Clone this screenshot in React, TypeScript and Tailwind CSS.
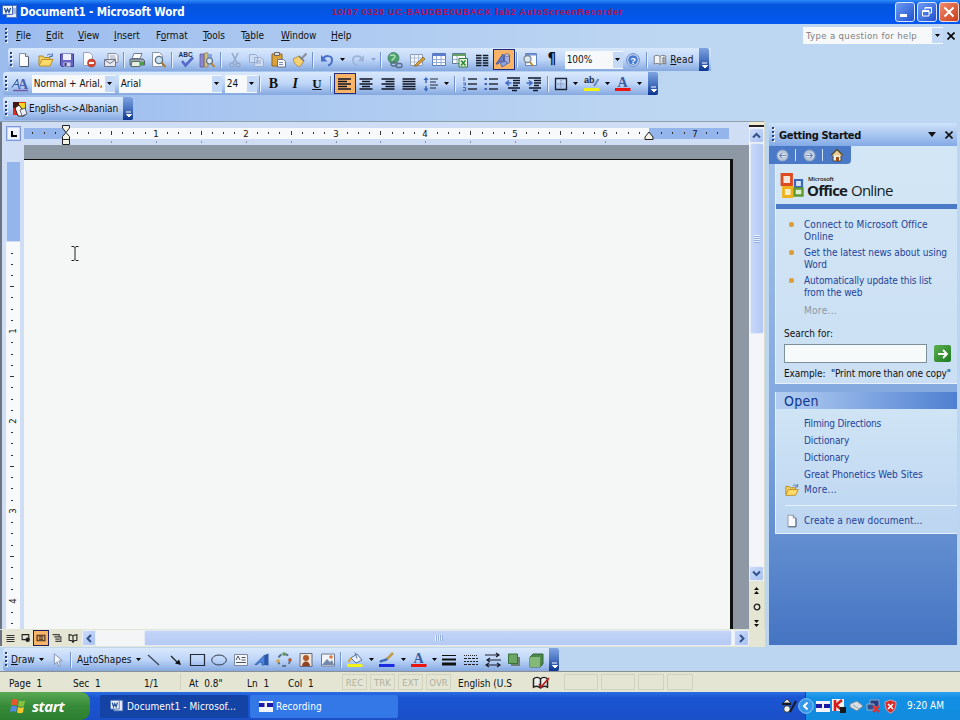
import React from "react";

type Kids = { children?: React.ReactNode };

/* ---------- small building blocks ---------- */

const Ico = ({ children, s = 18 }: Kids & { s?: number }) => (
  <svg width={s} height={s} viewBox="0 0 18 18" fill="none" className="shrink-0">
    {children}
  </svg>
);

const Cell = ({ children, w = "w-[21.7px]" }: Kids & { w?: string }) => (
  <div className={`flex h-full shrink-0 items-center justify-center ${w}`}>{children}</div>
);

const Sep = ({ w = "w-[5.5px]" }: { w?: string }) => (
  <div className={`flex h-full shrink-0 items-center justify-center ${w}`}>
    <div className="h-4 w-px bg-[#7093d0]" />
    <div className="h-4 w-px bg-[#e8f1fe]" />
  </div>
);

const Down = ({ w = "w-[10px]", c = "#000" }: { w?: string; c?: string }) => (
  <div className={`flex h-full shrink-0 items-center justify-center ${w}`}>
    <svg width="5" height="3" viewBox="0 0 5 3">
      <path d="M0 0h5L2.5 3z" fill={c} />
    </svg>
  </div>
);

const Grip = ({ w = "w-[13px]", p = "pl-[10px]" }: { w?: string; p?: string }) => (
  <div className={`flex h-full shrink-0 items-center ${w} ${p}`}>
    <svg width="3" height="15" viewBox="0 0 3 15">
      {[0, 4, 8, 12].map((y) => (
        <g key={y}>
          <rect x="1" y={y + 1} width="2" height="2" fill="#fff" />
          <rect x="0" y={y} width="2" height="2" fill="#27417c" />
        </g>
      ))}
    </svg>
  </div>
);

const Cap = () => (
  <div className="flex h-full w-[10px] shrink-0 items-end justify-center rounded-r-[2px] bg-linear-to-b from-[#7fa4e2] via-[#4a74c0] to-[#0c3590] pb-[2px]">
    <svg width="7" height="7" viewBox="0 0 7 7">
      <path d="M1 1h5M1.500 3.500h5L4 6z" stroke="#fff" strokeWidth="1" fill="#fff" />
    </svg>
  </div>
);

const Bar = ({ children, cls }: Kids & { cls: string }) => (
  <div className={`flex shrink-0 items-center bg-linear-to-b from-[#d9e8fc] via-[#bfd6f8] to-[#85a8e0] ${cls}`}>
    {children}
  </div>
);

const Combo = ({ children, cls }: Kids & { cls: string }) => (
  <div className={`flex h-[18px] shrink-0 items-center bg-[#f6f8fa] ${cls}`}>
    <span className="grow overflow-hidden pl-[2px] whitespace-nowrap">{children}</span>
    <div className="h-[16px] w-[10px] bg-[#c3d9f5]">
      <Down />
    </div>
  </div>
);

const U = ({ children }: Kids) => <span className="underline underline-offset-1">{children}</span>;

/* ---------- icons ---------- */

const page = "M4.5 2.5h6l3 3v10h-9z";
const NewDoc = ({ s }: { s?: number }) => (
  <Ico s={s}>
    <path d={page} fill="#fbfcfe" stroke="#8a93a8" />
    <path d="M10.500 2.500v3h3" fill="#dbe3ee" stroke="#6d7890" />
    <path d="M13.500 6v9.500H5" stroke="#4d5870" />
  </Ico>
);
const Folder = ({ s }: { s?: number }) => (
  <Ico s={s}>
    <path d="M2 14V5h4l1 1.500h6V9" fill="#f3cf61" stroke="#b38a21" />
    <path d="M2 15l3-6.500h11L13 15z" fill="#ffd96a" stroke="#b98e22" />
    <path d="M10 4.500c2-2 4-1.500 5 .5m.3-2.800V5.500h-3" stroke="#4a72b8" />
  </Ico>
);
const Save = () => (
  <Ico>
    <path d="M2.500 3h13v12.500h-12l-1-1z" fill="#6a63c6" stroke="#3e3a92" />
    <path d="M5 3h8v6H5z" fill="#eef0fb" />
    <path d="M5.500 11.500h7v4h-7z" fill="#cfd3e8" />
    <path d="M6.500 12h2v3h-2z" fill="#38347f" />
  </Ico>
);
const Perm = () => (
  <Ico>
    <path d="M3.500 1.500h6l3 3v10h-9z" fill="#fbfcfe" stroke="#98a2b6" />
    <circle cx="11.500" cy="12" r="4" fill="#d84a33" stroke="#a83020" strokeWidth=".6" />
    <path d="M9 12h5" stroke="#fff" strokeWidth="2" />
  </Ico>
);
const Mail = () => (
  <Ico>
    <path d="M6 2.500h8l2 2v7H6z" fill="#f4f5f8" stroke="#8a8fa0" />
    <path d="M8 5h5M8 7h6" stroke="#a0a6b8" />
    <path d="M2.500 8.500h11v7h-11z" fill="#e5e7ee" stroke="#6f7488" />
    <path d="M3 9l5 3.500L13 9" stroke="#6f7488" />
  </Ico>
);
const Print = () => (
  <Ico>
    <path d="M6 2.500h8l-2 5H4z" fill="#fff" stroke="#707a8c" />
    <path d="M2 8h13l1.500 1.500V14H2z" fill="#9aa6b4" stroke="#54606f" />
    <path d="M4 10.500h8v5H3z" fill="#e6efe6" stroke="#55705c" />
    <path d="M12 11h4v3h-4z" fill="#46a03f" />
  </Ico>
);
const Preview = () => (
  <Ico>
    <path d="M3.500 1.500h7l3 3v11h-10z" fill="#fafbfd" stroke="#8a94aa" />
    <circle cx="10" cy="9" r="3.600" fill="#cfe3ef" stroke="#58708a" strokeWidth="1.300" />
    <path d="M12.500 11.500l4 4.500" stroke="#a97832" strokeWidth="2" />
  </Ico>
);
const Spell = () => (
  <Ico>
    <text x="1.500" y="6" fontSize="6.500" fontWeight="700" fontFamily="Liberation Sans, sans-serif" fill="#1c2c50">ABC</text>
    <path d="M5 10l3.500 4.500L16 6.500" stroke="#5469cb" strokeWidth="2.600" />
  </Ico>
);
const Research = () => (
  <Ico>
    <path d="M2 3h4v13H2z" fill="#8f86d0" stroke="#5c54a2" strokeWidth=".7" />
    <path d="M6.500 2h3.500v14H6.500z" fill="#cfc08a" stroke="#8d7a45" strokeWidth=".7" />
    <path d="M10 3h4v6h-4z" fill="#87a7d8" />
    <circle cx="11.500" cy="10" r="3" fill="#dceaf4" stroke="#5a6e88" strokeWidth="1.200" />
    <path d="M13.500 12.500l3 3.500" stroke="#b88634" strokeWidth="2" />
  </Ico>
);
const Cut = () => (
  <Ico>
    <path d="M6 2l5 10M12 2L7 12" stroke="#93a7c9" strokeWidth="1.500" />
    <circle cx="6" cy="14" r="2" stroke="#93a7c9" strokeWidth="1.300" />
    <circle cx="12" cy="14" r="2" stroke="#93a7c9" strokeWidth="1.300" />
  </Ico>
);
const Copy = () => (
  <Ico>
    <path d="M2.500 3.500h6l2 2v6h-8zM7.500 6.500h6l3 2v7h-9z" fill="#cfdcf2" stroke="#98add0" />
    <path d="M9 10h5M9 12h5" stroke="#98add0" />
  </Ico>
);
const Paste = () => (
  <Ico>
    <path d="M3 3h10v12H3z" fill="#dba33b" stroke="#93641a" />
    <path d="M5.500 1.500h5v3h-5z" fill="#d9dde6" stroke="#70645a" />
    <path d="M8.500 8.500h6l2 2v5.500h-8z" fill="#f5f7fb" stroke="#6a7488" />
    <path d="M10 11.500h4M10 13.500h4" stroke="#7b8cb4" />
  </Ico>
);
const Brush = () => (
  <Ico>
    <path d="M2 8l6-3 5 5-4 5.500c-3 0-6-3-7-7.500z" fill="#f3d070" stroke="#a88230" strokeWidth=".8" />
    <path d="M10.500 7.500l5-5" stroke="#8a8f9c" strokeWidth="2.200" />
    <path d="M8 5l5 5" stroke="#6e7684" strokeWidth="1.500" />
  </Ico>
);
const Undo = () => (
  <Ico>
    <path d="M5 8c2-4 9-4 9 1 0 3-2 5-4 5.500" stroke="#4a6fc8" strokeWidth="2" />
    <path d="M3 4v6.500h6.500z" fill="#4a6fc8" />
  </Ico>
);
const Redo = () => (
  <Ico>
    <path d="M13 8c-2-4-9-4-9 1 0 3 2 5 4 5.500" stroke="#9fb3d6" strokeWidth="1.800" />
    <path d="M15 4v6.500H8.500z" fill="#9fb3d6" />
  </Ico>
);
const Link = () => (
  <Ico>
    <circle cx="7.500" cy="7" r="5.500" fill="#4da26b" stroke="#3d7c60" strokeWidth=".8" />
    <path d="M4 4c2 1 4-1 5 1s-3 2-3 5" stroke="#a7dcb8" strokeWidth="1.500" />
    <rect x="5" y="11" width="6" height="4" rx="2" stroke="#5b6d88" strokeWidth="1.300" />
    <rect x="10" y="12.500" width="6" height="4" rx="2" stroke="#5b6d88" strokeWidth="1.300" />
  </Ico>
);
const Tables = () => (
  <Ico>
    <path d="M2.500 3.500h12v11h-12z" fill="#f6f8fd" stroke="#8b9ab8" />
    <path d="M2.500 7h12M2.500 11h12M6.500 3.500v11M10.500 3.500v11" stroke="#b0bdd6" />
    <path d="M6 15l9-9 2 2-8 7z" fill="#d99f37" stroke="#80591a" strokeWidth=".7" />
  </Ico>
);
const Grid = () => (
  <Ico>
    <path d="M2.500 2.500h13v12h-13z" fill="#fafcff" stroke="#5b79b8" />
    <path d="M2.500 3h13v2h-13z" fill="#5b7fd0" />
    <path d="M2.500 8.500h13M2.500 11.500h13M6.500 5v9.500M11 5v9.500" stroke="#98aed6" />
  </Ico>
);
const Excel = () => (
  <Ico>
    <path d="M1.500 2.500h13v10h-13z" fill="#fafcff" stroke="#5d7c98" />
    <path d="M1.500 3h13v2h-13z" fill="#68a262" />
    <path d="M1.500 8.500h13M6 5v7.500" stroke="#9cb1bf" />
    <path d="M8 7.500h8.500v8.500H8z" fill="#e8f5e3" stroke="#2f7d33" />
    <path d="M10 9.500l4.500 5M14.500 9.500l-4.500 5" stroke="#2b8a30" strokeWidth="1.600" />
  </Ico>
);
const Columns = () => (
  <Ico>
    <path d="M3 4.500h5.500M3 7h5.500M3 9.500h5.500M3 12h5.500M3 14.500h5.500M9.800 4.500h5.500M9.800 7h5.500M9.800 9.500h5.500M9.800 12h5.500M9.800 14.500h5.500" stroke="#111827" strokeWidth="1.300" />
  </Ico>
);
const Drawing = () => (
  <Ico>
    <path d="M1 13L8 3l1 10H7v-3H5l-2 3z" fill="#6f86cf" stroke="#3b4f98" strokeWidth=".9" />
    <path d="M9.500 4v7.500c1 1.200 4 1.200 5 0V4z" fill="#a6aedb" stroke="#4a5aa0" strokeWidth=".9" />
    <ellipse cx="12" cy="4" rx="2.500" ry="1.200" fill="#f3e4c0" stroke="#4a5aa0" strokeWidth=".8" />
    <path d="M5 11.500l6-1.500 1 3-5 3z" fill="#8ba3df" stroke="#4b5fa0" strokeWidth=".8" />
  </Ico>
);
const DocMap = () => (
  <Ico>
    <path d="M4.500 2.500h11v12h-11z" fill="#fafcfe" stroke="#6082bd" />
    <path d="M4.500 3h11v1.500h-11z" fill="#6f94d8" />
    <circle cx="6.500" cy="8" r="3.500" fill="#dbe8f2" stroke="#7b8593" strokeWidth="1.300" />
    <path d="M9 11l3 4" stroke="#b78d36" strokeWidth="2" />
  </Ico>
);
const Help = () => (
  <Ico>
    <circle cx="9" cy="9" r="6.300" fill="#dbe8fb" stroke="#5b80c2" />
    <circle cx="9" cy="9" r="4.800" fill="#4878cf" />
    <text x="6.200" y="12.500" fontSize="9.500" fontWeight="700" fontFamily="Liberation Sans, sans-serif" fill="#fff">?</text>
  </Ico>
);
const Book = ({ s, c = "#6f7377" }: { s?: number; c?: string }) => (
  <Ico s={s}>
    <path d="M2.500 4.500c2-1 5-1 6.500.5 1.500-1.500 4.500-1.500 6.500-.5v9c-2-1-5-1-6.500.5-1.500-1.500-4.500-1.500-6.500-.5z" fill="#f1f3f5" stroke={c} />
    <path d="M9 5v9M11 7h3M11 9h3M11 11h3M13.500 5v9" stroke={c} />
  </Ico>
);
const Lines = ({ d }: { d: string }) => (
  <Ico>
    <path d={d} stroke="#101625" strokeWidth="1.300" />
  </Ico>
);
const Color = ({ c, children }: Kids & { c: string }) => (
  <Ico>
    {children}
    <path d="M1 13h15.500v3H1z" fill={c} />
  </Ico>
);
const LetterA = () => (
  <text x="3.500" y="12" fontSize="14" fontWeight="700" fontFamily="Liberation Serif, serif" fill="#395da0">A</text>
);

/* ---------- horizontal and vertical rulers ---------- */

const INCH = 89.85;
const marks = Array.from({ length: 64 }, (_, i) => i - 3);

const HRuler = () => (
  <svg width="725" height="24" viewBox="24 121 725 24" className="shrink-0" shapeRendering="crispEdges">
    <rect x="24" y="121" width="725" height="24" fill="#d0def5" />
    <rect x="24" y="127" width="42" height="11" fill="#94b5eb" />
    <rect x="66" y="127" width="583" height="11" fill="#f8f9fa" />
    <rect x="649" y="127" width="80" height="11" fill="#94b5eb" />
    {marks.map((i) => {
      const x = Math.round(66 + (i * INCH) / 8);
      if (x > 722 || i === 0 || Math.abs(x - 649) < 5) return null;
      if (i > 0 && i % 8 === 0)
        return (
          <g key={i}>
            <text x={x} y="136" fontSize="9.500" textAnchor="middle" fill="#111">{i / 8}</text>
            {x < 649 && <rect x={x} y="140" width="1" height="2" fill="#8b93a4" />}
          </g>
        );
      if (i > 0 && i % 4 === 0)
        return (
          <g key={i}>
            <rect x={x} y="130" width="1" height="4" fill="#333" />
            {x < 649 && <rect x={x} y="140" width="1" height="2" fill="#8b93a4" />}
          </g>
        );
      return <rect key={i} x={x} y="131" width="1" height="2" fill="#333" />;
    })}
    <g shapeRendering="auto" fill="#f3f3e6" stroke="#222" strokeWidth="1">
      <path d="M62.500 124.500h7v2.500l-3.500 4.500-3.500-4.500z" />
      <path d="M66 131.500l3.500 4v3h-7v-3zM62.500 138.500h7v5h-7z" />
      <path d="M649 131l4 5v2.500h-8V136z" />
    </g>
  </svg>
);

const VRuler = () => (
  <svg width="20" height="484" viewBox="4 145 20 484" className="shrink-0" shapeRendering="crispEdges">
    <rect x="4" y="145" width="20" height="484" fill="#d0def5" />
    <rect x="7" y="162" width="13" height="79" fill="#94b5eb" />
    <rect x="6" y="242" width="14" height="387" fill="#f8f9fa" />
    {Array.from({ length: 35 }, (_, k) => k + 1).map((i) => {
      const y = Math.round(241.300 + (i * INCH) / 8);
      if (y > 627) return null;
      if (i % 8 === 0)
        return (
          <text key={i} transform={`translate(16 ${y}) rotate(-90)`} fontSize="9.500" textAnchor="middle" fill="#111">
            {i / 8}
          </text>
        );
      if (i % 4 === 0) return <rect key={i} x="10" y={y} width="4" height="1" fill="#333" />;
      return <rect key={i} x="11" y={y} width="2" height="1" fill="#333" />;
    })}
  </svg>
);

const SBtn = ({ d, cls = "h-[15px] w-[15px]" }: { d: string; cls?: string }) => (
  <div className={`flex shrink-0 items-center justify-center rounded-[2px] border border-[#eaf0fb] bg-linear-to-br from-[#cbdcfb] to-[#a9c2f0] ${cls}`}>
    <svg width="9" height="9" viewBox="0 0 9 9" fill="none">
      <path d={d} stroke="#36508c" strokeWidth="2" />
    </svg>
  </div>
);

/* ---------- sections ---------- */

const TitleBar = () => (
  <div className="flex h-6 shrink-0 items-center bg-linear-to-b from-[#2f8afb] from-0% via-[#0454dc] via-20% to-[#0558f2] pr-px">
    <svg width="16" height="16" viewBox="0 0 16 16" className="ml-[2px] shrink-0">
      <path d="M4.500 1.500h10v12h-10z" fill="#e7edf8" stroke="#5a78b8" />
      <path d="M11 5h3M11 7h3M11 9h3" stroke="#6a88c0" />
      <path d="M.5 1.500h10v9H.500z" fill="#f3f6fb" stroke="#486cb8" />
      <path d="M2.500 4l1.500 4.500L5.500 5 7 8.500 8.500 4" fill="none" stroke="#29549c" strokeWidth="1.300" />
    </svg>
    <div className="w-[314px] pt-[2px] pl-[2px] text-[11.5px] leading-none font-bold tracking-[-0.1px] text-white">
      Document1 - Microsoft Word
    </div>
    <div className="w-[300px] pt-px font-['Liberation_Sans'] text-[9px] leading-none font-bold tracking-[0.78px] whitespace-nowrap text-[#b5104a]">
      10/07 0320 UC-BAUDBE0UBACK lab2 AutoScreenRecorder
    </div>
    <div className="grow" />
    <div className="flex gap-[2px]">
      <div className="h-5 w-5 rounded-[3px] border border-[#dbe6fb] bg-linear-to-br from-[#6f9bf3] to-[#1f4fce] pt-[11px] pl-1">
        <div className="h-[3px] w-[7px] bg-white" />
      </div>
      <div className="flex h-5 w-5 items-center justify-center rounded-[3px] border border-[#dbe6fb] bg-linear-to-br from-[#6f9bf3] to-[#1f4fce]">
        <svg width="12" height="12" viewBox="0 0 12 12" fill="none" stroke="#fff">
          <path d="M4 3.500v-2h6.500V7H8M4 2h6.500M1.500 4.500H8V10H1.500zM1.500 5.500H8" />
        </svg>
      </div>
      <div className="flex h-5 w-5 items-center justify-center rounded-[3px] border border-[#f3dcd5] bg-linear-to-br from-[#ee8a6c] to-[#c93a12]">
        <svg width="12" height="12" viewBox="0 0 12 12" stroke="#fff" strokeWidth="2">
          <path d="M1.500 1.500l9 9M10.500 1.500l-9 9" />
        </svg>
      </div>
    </div>
  </div>
);

const menus: [string, string, string, string][] = [
  ["", "F", "ile", "w-[30px]"],
  ["", "E", "dit", "w-[32px]"],
  ["", "V", "iew", "w-[36px]"],
  ["", "I", "nsert", "w-[42px]"],
  ["F", "o", "rmat", "w-[47px]"],
  ["", "T", "ools", "w-[38px]"],
  ["T", "a", "ble", "w-[40px]"],
  ["", "W", "indow", "w-[50px]"],
  ["", "H", "elp", "w-[40px]"],
];

const MenuBar = () => (
  <div className="flex h-[23px] shrink-0 items-center">
    <Grip w="w-4" p="pl-[5px]" />
    {menus.map(([a, b, c, w]) => (
      <div key={b + c} className={`shrink-0 pt-px whitespace-nowrap ${w}`}>
        {a}
        <U>{b}</U>
        {c}
      </div>
    ))}
    <div className="grow" />
    <div className="flex h-[17px] w-[140px] items-center bg-[#f6f8fa] text-[#808080]">
      <span className="grow pl-[3px] text-[9.5px] tracking-[0.35px] whitespace-nowrap">Type a question for help</span>
      <div className="h-[15px] w-[11px] bg-[#c3d9f5]">
        <Down />
      </div>
    </div>
    <svg width="8" height="8" viewBox="0 0 8 8" className="mr-[5px] ml-[4px]" stroke="#000" strokeWidth="1.600">
      <path d="M.5.5l7 7M7.500.5l-7 7" />
    </svg>
  </div>
);

const StandardBar = () => (
  <Bar cls="ml-2 h-[23px] w-[703px] rounded-l-[3px]">
    <Grip w="w-[5px]" p="pl-[2px]" />
    {[NewDoc, Folder, Save, Perm, Mail].map((I, i) => (
      <Cell key={i}><I /></Cell>
    ))}
    <Sep w="w-[4.5px]" />
    <Cell><Print /></Cell>
    <Cell><Preview /></Cell>
    <Sep />
    <Cell><Spell /></Cell>
    <Cell><Research /></Cell>
    <Sep />
    <Cell><Cut /></Cell>
    <Cell><Copy /></Cell>
    <Cell><Paste /></Cell>
    <Cell><Brush /></Cell>
    <Sep />
    <Cell><Undo /></Cell>
    <Down />
    <Cell><Redo /></Cell>
    <Down w="w-[9px]" c="#8ea3c8" />
    <Sep w="w-[6px]" />
    <Cell><Link /></Cell>
    <Cell><Tables /></Cell>
    <Cell><Grid /></Cell>
    <Cell><Excel /></Cell>
    <Cell><Columns /></Cell>
    <div className="flex h-[21px] w-[22px] shrink-0 items-center justify-center border border-[#1c2c82] bg-[#f9b468]">
      <Drawing />
    </div>
    <Sep w="w-[4.5px]" />
    <Cell><DocMap /></Cell>
    <Cell>
      <span className="font-['DejaVu_Sans'] text-[15px] leading-none font-bold text-[#0c1222]">¶</span>
    </Cell>
    <Combo cls="ml-[2px] w-[58px]">100%</Combo>
    <Cell><Help /></Cell>
    <Sep w="w-[5px]" />
    <Cell w="w-[21px]"><Book s={16} /></Cell>
    <span className="w-[29px] shrink-0 tracking-[0.2px]"><U>R</U>ead</span>
    <Cap />
  </Bar>
);

const FormatBar = () => (
  <Bar cls="ml-[3px] h-[23px] w-[655px] rounded-l-[3px]">
    <Grip w="w-[6px]" p="pl-[2px]" />
    <Cell>
      <Ico>
        <path d="M1 12.500L6.500 4l1 8.500M3.500 9.500h4" stroke="#28519e" />
        <text x="7" y="14" fontSize="14" fontWeight="700" fontFamily="Liberation Serif, serif" fill="#495fae">A</text>
        <path d="M2 15.500h15" stroke="#7056a8" strokeWidth="1.400" />
      </Ico>
    </Cell>
    <Combo cls="ml-[1px] w-[83px]">Normal + Arial,</Combo>
    <Combo cls="ml-[4px] w-[103px]">Arial</Combo>
    <Combo cls="ml-[3px] w-[32px]">24</Combo>
    <Sep w="w-[6px]" />
    <Cell><b className="font-['Liberation_Serif'] text-[14px] leading-none font-black">B</b></Cell>
    <Cell><b className="font-['Liberation_Serif'] text-[14px] leading-none italic">I</b></Cell>
    <Cell><b className="font-['Liberation_Serif'] text-[13px] leading-none underline">U</b></Cell>
    <Sep w="w-[6px]" />
    <div className="flex h-[21px] w-[22px] shrink-0 items-center justify-center border border-[#1c2c82] bg-[#f9b468]">
      <Lines d="M2 4h13M2 6.500h9M2 9h13M2 11.500h9M2 14h13" />
    </div>
    <Cell w="w-[21px]"><Lines d="M2.500 4h13M5 6.500h8M2.500 9h13M5 11.500h8M2.500 14h13" /></Cell>
    <Cell><Lines d="M2.500 4h13M6.500 6.500h9M2.500 9h13M6.500 11.500h9M2.500 14h13" /></Cell>
    <Cell><Lines d="M2.500 4h13M2.500 6.500h13M2.500 9h13M2.500 11.500h13M2.500 14h13" /></Cell>
    <Cell>
      <Ico>
        <path d="M8 4h8M8 7h6M8 10h8M8 13h6" stroke="#222a3c" strokeWidth="1.200" />
        <path d="M4 3v5M4 11v5" stroke="#3b67bd" strokeWidth="1.500" />
        <path d="M1.500 5L4 2l2.500 3zM1.500 13.500L4 16.500l2.500-3z" fill="#3b67bd" />
      </Ico>
    </Cell>
    <Down />
    <Sep w="w-[7px]" />
    <Cell>
      <Ico>
        <path d="M7 4h9M7 9h9M7 14h9" stroke="#2a3040" strokeWidth="1.300" />
        <path d="M3 2v4M2 8h2.500v2H2.500M2 12.500h2.500v3H2" stroke="#4266b4" />
      </Ico>
    </Cell>
    <Cell>
      <Ico>
        <path d="M7 4h9M7 9h9M7 14h9" stroke="#2a3040" strokeWidth="1.300" />
        <path d="M2.500 3h2.500v2H2.500zM2.500 8h2.500v2H2.500zM2.500 13h2.500v2H2.500z" fill="#4266b4" />
      </Ico>
    </Cell>
    <Cell>
      <Ico>
        <path d="M3 3h13M9 5.500h7M9 8h7M9 10.500h5M4 13h12M8 15.500h5" stroke="#10182a" strokeWidth="1.300" />
        <path d="M7.500 8H3M5 5.500L2 8l3 2.500" stroke="#4068c0" strokeWidth="1.500" />
      </Ico>
    </Cell>
    <Cell w="w-[21px]">
      <Ico>
        <path d="M3 3h13M9 5.500h7M9 8h7M9 10.500h5M4 13h12M8 15.500h5" stroke="#10182a" strokeWidth="1.300" />
        <path d="M1.500 8H6M4 5.500L7 8l-3 2.500" stroke="#4068c0" strokeWidth="1.500" />
      </Ico>
    </Cell>
    <Sep w="w-[6px]" />
    <Cell w="w-[20px]">
      <Ico>
        <path d="M3.500 3.500h11v11h-11z" stroke="#1c2538" strokeWidth="1.300" />
        <path d="M9 5v8M5 9h8" stroke="#7285a8" strokeDasharray="1.500 1" />
      </Ico>
    </Cell>
    <Down />
    <Cell>
      <Color c="#f2f215">
        <text x="1" y="8" fontSize="9" fontWeight="700" fontFamily="Liberation Sans, sans-serif" fill="#1c263c">ab</text>
        <path d="M11 11l4.500-7" stroke="#7187bb" strokeWidth="2.300" />
      </Color>
    </Cell>
    <Down />
    <Cell><Color c="#ec1310"><LetterA /></Color></Cell>
    <Down />
    <div className="grow" />
    <Cap />
  </Bar>
);

const DictBar = () => (
  <Bar cls="ml-[3px] mt-px h-[23px] w-[130px] rounded-l-[3px]">
    <Grip w="w-[9px]" p="pl-[2px]" />
    <svg width="16" height="16" viewBox="0 0 16 16">
      <path d="M1 1h13v13H1z" fill="#e22b16" />
      <path d="M1 1h6v6H1z" fill="#48150f" />
      <path d="M7 2h6v6H7z" fill="#f5d51e" />
      <path d="M3 7l4-3 3 4 4 3-2 4H6z" fill="#fff" stroke="#2a2320" />
      <path d="M8 9l5-2 2 6-5 2z" fill="#e9eef8" stroke="#31343c" strokeWidth=".7" />
    </svg>
    <span className="grow pl-px tracking-[-0.05px] whitespace-nowrap">English&lt;-&gt;Albanian</span>
    <Cap />
  </Bar>
);

const Editor = () => (
  <div className="flex h-[526px] w-[765px] shrink-0 flex-col">
    <div className="flex h-[508px]">
      <div className="flex w-[749px] flex-col">
        <div className="flex h-6 border-t border-[#8fa0ab]">
          <div className="flex w-6 shrink-0 items-center justify-center border-l-2 border-[#6b7480] bg-[#d0def5]">
            <div className="h-[15px] w-[15px] border border-[#7c98da] bg-[#eef3fc] pt-[4px] pl-[4px] shadow-[inset_0_0_0_1px_#c5d5f2]">
              <div className="h-[6px] w-[6px] border-b-2 border-l-2 border-black" />
            </div>
          </div>
          <HRuler />
        </div>
        <div className="flex h-[484px]">
          <div className="w-[4px] shrink-0 border-l-2 border-[#6b7480] bg-[#d0def5]" />
          <VRuler />
          <div className="grow bg-[#8e98a5] pt-[14px] pr-4">
            <div className="h-[470px] border-t-[1.5px] border-r-[3px] border-[#111] bg-[#f5f7f6] pt-[85px] pl-[47px]">
              <svg width="8" height="17" viewBox="0 0 8 17" fill="none" stroke="#222">
                <path d="M.5 1.500h2.500l1 1 1-1h2.500M4 2v12.500M.5 15.500h2.500l1-1 1 1h2.500" />
              </svg>
            </div>
          </div>
        </div>
      </div>
      <div className="flex w-4 flex-col items-center border-r border-[#d7dccb] bg-[#f3f5f8]">
        <div className="h-[6px] w-full border-t border-b-2 border-t-[#8fa0ab] border-b-[#222] bg-[#f0edcf]" />
        <div className="h-px" />
        <SBtn d="M1 6.500l3.500-3.500L8 6.500" />
        <div className="flex h-[191px] w-[14px] flex-col items-center justify-center gap-px rounded-[2px] border border-[#e3ebfb] bg-linear-to-r from-[#c7d8fa] to-[#b3c9f4]">
          {[0, 1, 2, 3].map((i) => (
            <div key={i} className="h-px w-[6px] bg-[#e9f0fe] shadow-[0_1px_0_#93aee0]" />
          ))}
        </div>
        <div className="grow" />
        <SBtn d="M1 2.500L4.500 6 8 2.500" />
        <div className="flex h-[48px] w-full flex-col items-center justify-between bg-[#e5e5d3] pt-[6px] pb-[2px]">
          <svg width="7" height="8" viewBox="0 0 7 8"><path d="M3.500 0L6 3h-5zM3.500 4L6 7h-5z" fill="#111" /></svg>
          <svg width="8" height="8" viewBox="0 0 8 8"><circle cx="4" cy="4" r="2.800" fill="none" stroke="#222" strokeWidth="1.300" /></svg>
          <svg width="7" height="8" viewBox="0 0 7 8"><path d="M3.500 4L6 1h-5zM3.500 8L6 5h-5z" fill="#111" /></svg>
        </div>
      </div>
    </div>
    <div className="flex h-[18px] items-start bg-[#e5e5d3] pt-px">
      <div className="flex h-[16px] w-[82px] items-center border-l-2 border-[#6b7480]">
        <Cell w="w-[16px]"><Ico s={9}><path d="M1 3h16M1 7h16M1 11h16M1 15h16" stroke="#333" strokeWidth="2" /></Ico></Cell>
        <Cell w="w-[15px]"><Ico s={10}><path d="M2 3h12v9H2z" stroke="#222" strokeWidth="2" /><circle cx="12" cy="12" r="4" fill="#222" /></Ico></Cell>
        <div className="flex h-[16px] w-[16px] items-center justify-center border border-[#1c2060] bg-[#f9b468]">
          <Ico s={10}><path d="M2 4h14v10H2zM5 7h8M5 11h8" stroke="#3a2a20" strokeWidth="2" /></Ico>
        </div>
        <Cell w="w-[16px]"><Ico s={10}><path d="M1 3h12v4h3v8H6M4 7h8M6 11h8" stroke="#444" strokeWidth="2" /></Ico></Cell>
        <Cell w="w-[15px]"><Ico s={10}><path d="M2 3l5 1 2 2 2-2 5-1v10l-5 1-2 3-2-3-5-1zM9 6v10" stroke="#222" strokeWidth="2" /></Ico></Cell>
      </div>
      <SBtn d="M6 1L2.500 4.500 6 8" cls="h-4 w-[14px]" />
      <div className="flex h-4 w-[638px] bg-[#f3f5f6] pl-[48px]">
        <div className="flex h-full w-[588px] items-center justify-center gap-px rounded-[2px] border border-[#e3ebfb] bg-linear-to-b from-[#c3d4f8] to-[#b5caf3]">
          {[0, 1, 2, 3].map((i) => (
            <div key={i} className="h-[6px] w-px bg-[#e9f0fe] shadow-[1px_0_0_#93aee0]" />
          ))}
        </div>
      </div>
      <SBtn d="M3 1l3.500 3.500L3 8" cls="h-4 w-[15px]" />
    </div>
  </div>
);

const Bullet = ({ children, cls = "" }: Kids & { cls?: string }) => (
  <div className="mb-[4px] flex">
    <div className="mt-[3px] mr-[10px] h-[5px] w-[5px] shrink-0 rounded-[2px] bg-[#dd9f35]" />
    <div className={`whitespace-nowrap ${cls}`}>{children}</div>
  </div>
);

const NavArrow = ({ d }: { d: string }) => (
  <svg width="13" height="13" viewBox="0 0 13 13" fill="none">
    <circle cx="6.500" cy="6.500" r="5.500" fill="#b9c6d8" stroke="#93a7c6" />
    <path d={d} stroke="#eef3fa" strokeWidth="2.600" />
    <path d={d} stroke="#6b87b4" strokeWidth="1.200" />
  </svg>
);

const TaskPane = () => (
  <div className="mt-[2px] ml-[4px] flex h-[522px] w-[188px] shrink-0 flex-col bg-linear-to-b from-[#a9c6ec] via-[#7ea5dd] via-60% to-[#4574c2] text-[#1f429a]">
    <div className="flex h-[23px] shrink-0 items-center bg-linear-to-b from-[#cfe2f8] to-[#83aae6]">
      <Grip w="w-[10px]" p="pl-[3px]" />
      <span className="grow pt-px text-[11px] font-bold tracking-[-0.35px] whitespace-nowrap text-[#111]">Getting Started</span>
      <svg width="8" height="5" viewBox="0 0 8 5" className="mr-[9px]"><path d="M0 0h8L4 5z" fill="#111" /></svg>
      <svg width="8" height="8" viewBox="0 0 8 8" className="mr-[4px]" stroke="#111" strokeWidth="1.600"><path d="M.5.5l7 7M7.500.5l-7 7" /></svg>
    </div>
    <div className="h-[18px] shrink-0 bg-[#d2e6f5]">
      <div className="flex h-[18px] w-[82px] items-center rounded-br-[4px] bg-[#4a79c8] pl-[7px]">
        <NavArrow d="M10 6.500H3.500M6 4L3.500 6.500 6 9" />
        <div className="mx-[6px] h-3 w-px bg-[#d6e3f6]" />
        <div className="ml-px"><NavArrow d="M3 6.500h6.500M7 4l2.500 2.500L7 9" /></div>
        <div className="mr-[7px] ml-[6px] h-3 w-px bg-[#d6e3f6]" />
        <svg width="14" height="14" viewBox="0 0 14 14">
          <path d="M3 7v6h8V7" fill="#f5efe0" stroke="#4d4639" />
          <path d="M1 7.500L7 1.500l6 6" fill="#e8cf98" stroke="#5e4a2a" strokeWidth="1.300" />
          <path d="M6 9h3v4H6z" fill="#9b4e1c" />
        </svg>
      </div>
    </div>
    <div className="ml-[6px] h-[220px] w-[182px] shrink-0 border-b border-l border-[#e4f0fb] bg-linear-to-b from-[#d2e6f5] to-[#cbdff4]">
      <div className="flex h-[40px] items-start pt-[8px] pl-[4px]">
        <svg width="26" height="28" viewBox="0 0 26 28" fill="none" className="shrink-0">
          <path d="M2 2.500h9.500v10H2z" fill="#f3e6df" stroke="#dd4a20" strokeWidth="2.800" />
          <path d="M15 8h7v7h-7z" fill="#d5e4f5" stroke="#3a66bb" strokeWidth="2.200" />
          <path d="M3.500 15.500h8.500v9H3.500z" fill="#f7edc8" stroke="#f0b21c" strokeWidth="2.800" />
          <path d="M14.500 16.500h8v7h-8z" fill="#deedcf" stroke="#5d9a34" strokeWidth="2.400" />
        </svg>
        <div className="pt-[5px] pl-px text-[#171c22]">
          <div className="h-[5px] pl-px font-['Open_Sans'] text-[6px] leading-[5px] font-semibold tracking-[-0.2px] [font-stretch:normal]">Microsoft</div>
          <div className="flex font-['Open_Sans'] text-[15px] leading-[16px] tracking-[-0.75px] whitespace-nowrap [font-stretch:normal]">
            <b className="w-[44px] font-bold">Office</b>
            <span>Online</span>
          </div>
        </div>
      </div>
      <div className="h-[5px] bg-[#4a79c8]" />
      <div className="pt-[10px] pl-[13px] leading-[12px]">
        <Bullet cls="tracking-[0.06px]">Connect to Microsoft Office<br />Online</Bullet>
        <Bullet cls="tracking-[-0.03px]">Get the latest news about using<br />Word</Bullet>
        <Bullet cls="tracking-[-0.14px]">Automatically update this list<br />from the web</Bullet>
        <div className="mt-[6px] ml-[15px] tracking-[0.3px] text-[#8b97a4]">More...</div>
      </div>
      <div className="mt-[10px] pl-[8px] leading-[13px] text-[#111]">
        <div>Search for:</div>
        <div className="mt-[4px] flex items-center">
          <div className="h-[19px] w-[143px] border border-[#7d8f9b] bg-[#f7fafa]" />
          <div className="ml-[7px] flex h-[17px] w-[17px] items-center justify-center rounded-[2px] bg-linear-to-br from-[#5bb04f] to-[#1b7a22]">
            <svg width="12" height="12" viewBox="0 0 12 12" fill="none" stroke="#fff" strokeWidth="1.800"><path d="M1 6h9M6 2l4 4-4 4" /></svg>
          </div>
        </div>
        <div className="mt-[4px] tracking-[-0.09px] whitespace-pre">Example:  "Print more than one copy"</div>
      </div>
    </div>
    <div className="mt-[8px] ml-[6px] h-[142px] w-[182px] shrink-0 border-b border-l border-[#e4f0fb] bg-linear-to-b from-[#d2e6f5] to-[#bcd5f1]">
      <div className="h-[17px] bg-linear-to-r from-[#b5cff2] to-[#4f7fd0] pl-[8px] text-[14px] leading-[18px] tracking-[0.3px] text-[#10368c]">Open</div>
      <div className="pt-[6px] pl-[28px] leading-[17px]">
        <div className="tracking-[-0.18px]">Filming Directions</div>
        <div className="tracking-[-0.1px]">Dictionary</div>
        <div className="tracking-[-0.1px]">Dictionary</div>
        <div>Great Phonetics Web Sites</div>
      </div>
      <div className="-mt-px flex h-[16px] items-center pl-[8px]"><Folder s={16} /><span className="pl-[4px] tracking-[0.3px]">More...</span></div>
      <div className="mt-[7px] ml-[9px] h-px bg-[#e8f2fb]" />
      <div className="mt-[7px] flex h-[15px] items-center pl-[8px]"><NewDoc s={16} /><span className="pl-[4px] tracking-[0.08px] whitespace-nowrap">Create a new document...</span></div>
    </div>
  </div>
);

const DrawBar = () => (
  <div className="flex h-[25px] shrink-0 items-end border-b border-[#8b9097] bg-[#bcd6f1]">
    <Bar cls="ml-[3px] h-[23px] w-[556px] rounded-l-[3px]">
      <Grip w="w-[8px]" p="pl-[2px]" />
      <span className="w-[24px]"><U>D</U>raw</span>
      <Down w="w-[12px]" />
      <Cell w="w-[20px]"><Ico s={16}><path d="M6 2v12l3-3 2 5 2-1-2-5h4z" fill="#f7f9fd" stroke="#7d8ba8" /></Ico></Cell>
      <Sep w="w-[7px]" />
      <span className="w-[61px] pl-[3px] tracking-[0.08px] whitespace-nowrap">A<U>u</U>toShapes</span>
      <Down w="w-[7px]" />
      <Cell w="w-[23px]"><Ico><path d="M3 4l11 10" stroke="#3b4558" strokeWidth="1.300" /></Ico></Cell>
      <Cell><Ico><path d="M4 5l6 6" stroke="#222" strokeWidth="1.300" /><path d="M8 12.500L12 8.500l2 5.500z" fill="#111" /></Ico></Cell>
      <Cell><Ico><path d="M1.500 3.500h14v11h-14z" stroke="#222a3a" strokeWidth="1.200" /></Ico></Cell>
      <Cell><Ico><ellipse cx="9" cy="9" rx="7.300" ry="5" stroke="#333c4e" /></Ico></Cell>
      <Cell><Ico><path d="M2.500 3.500h13v11h-13z" fill="#f5f7fb" stroke="#7b88a2" /><path d="M4 9l2-4 2 4M9.500 6.500h4M9.500 9h4M4 11.500h10" stroke="#4b5568" /></Ico></Cell>
      <Cell><Ico><path d="M1 13.500L10.500 4v10H8v-2.500H5.500l-2 2z" fill="#4a84dc" stroke="#2455a4" strokeWidth=".7" /><path d="M10.500 4l4-1.500v12l-4-.5z" fill="#2c58aa" /></Ico></Cell>
      <Cell><Ico><circle cx="9" cy="9" r="6" stroke="#5d7190" strokeWidth="2" strokeDasharray="4 3" /><circle cx="9" cy="3" r="1.800" fill="#5d9b51" /><circle cx="15" cy="9" r="1.800" fill="#b95b35" /><circle cx="3" cy="10" r="1.800" fill="#d6a842" /></Ico></Cell>
      <Cell><Ico><path d="M3 2.500h12v13H3z" fill="#efe7dc" stroke="#65697c" /><circle cx="9" cy="7" r="3" fill="#b05a28" /><path d="M5 15c0-6 8-6 8 0z" fill="#8c4425" /></Ico></Cell>
      <Cell><Ico><path d="M2.500 3h13v12h-13z" fill="#f0f3f7" stroke="#6d7a92" /><path d="M3 14l5-6 3 3 2-2 2 5z" fill="#7588a8" /><circle cx="12" cy="6" r="1.800" fill="#d9773c" /></Ico></Cell>
      <Sep w="w-[5px]" />
      <Cell w="w-[23px]"><Color c="#f2f215"><path d="M5 7l6-4 5 6-6 3z" fill="#eef2f8" stroke="#54719f" /><path d="M9 1.500l2 6" stroke="#54719f" /><path d="M5 7l-2.500 4" stroke="#d2a431" strokeWidth="2" /></Color></Cell>
      <Down w="w-[9px]" />
      <Cell w="w-[23px]"><Color c="#1a2be0"><path d="M2 11c3-3 5 0 8-4" stroke="#4067b2" strokeWidth="2.400" /><path d="M9 8l6-6" stroke="#c29a4a" strokeWidth="2.500" /></Color></Cell>
      <Down w="w-[9px]" />
      <Cell w="w-[23px]"><Color c="#ec1310"><LetterA /></Color></Cell>
      <Down w="w-[8px]" />
      <Cell><Ico><path d="M2 4.500h14" stroke="#111" /><path d="M2 8.500h14" stroke="#111" strokeWidth="2" /><path d="M2 13h14" stroke="#111" strokeWidth="3" /></Ico></Cell>
      <Cell><Ico><path d="M2 4.500h14" stroke="#222" strokeDasharray="1 1" /><path d="M2 7.500h14M2 13.500h14" stroke="#222" strokeDasharray="3 1" /><path d="M2 10.500h14" stroke="#222" strokeDasharray="2 1" /></Ico></Cell>
      <Cell><Ico><path d="M1 4h14M3 9h14M2 14h14M12 2l3 2-3 2M6 7L3 9l3 2M5 12l-3 2 3 2M13 12l3 2-3 2" stroke="#1a1f2b" strokeWidth="1.200" /></Ico></Cell>
      <Cell><Ico><path d="M6 6h9v9H6z" fill="#6b7f72" /><path d="M3.500 3h9v9.500h-9z" fill="#6aa561" stroke="#38723a" /></Ico></Cell>
      <Cell><Ico><path d="M3 6l3-3h10v10l-3 3H3z" fill="#4b8a4b" stroke="#38633b" /><path d="M3 6h10v10H3z" fill="#83b878" /></Ico></Cell>
      <div className="grow" />
      <Cap />
    </Bar>
  </div>
);

const Stat = ({ children, w }: Kids & { w: string }) => (
  <div className={`shrink-0 pt-[3px] whitespace-nowrap text-[#111] ${w}`}>{children}</div>
);

const Box = ({ w, children }: Kids & { w: string }) => (
  <div className={`mr-[3px] flex h-[16px] shrink-0 items-center justify-center border border-[#d2d2c1] pt-px text-[9.5px] whitespace-nowrap text-[#aeb0a2] ${w}`}>{children}</div>
);

const StatusBar = () => (
  <div className="flex h-5 shrink-0 items-center bg-[#e5e5d3] pl-[9px]">
    <Stat w="w-[64px]">Page&nbsp; 1</Stat>
    <Stat w="w-[71px]">Sec&nbsp; 1</Stat>
    <Stat w="w-[36px]">1/1</Stat>
    <div className="mr-[8px] h-4 w-px bg-[#d2d2c1]" />
    <Stat w="w-[58px]">At&nbsp; 0.8"</Stat>
    <Stat w="w-[41px]">Ln&nbsp; 1</Stat>
    <Stat w="w-[54px]">Col&nbsp; 1</Stat>
    <Box w="w-[25px]">REC</Box>
    <Box w="w-[25px]">TRK</Box>
    <Box w="w-[25px]">EXT</Box>
    <Box w="w-[25px]">OVR</Box>
    <div className="w-[4px]" />
    <Stat w="w-[74px]">English (U.S</Stat>
    <svg width="19" height="14" viewBox="0 0 19 14" fill="none" className="mt-px">
      <path d="M1.500 3c2-2 5-2 7 0 2-2 5-2 7 0v8c-2-1-5-1-7 1-2-2-5-2-7-1zM8.500 3v9" stroke="#222" strokeWidth="1.500" fill="#eef0ee" />
      <path d="M7 8l2 3 8-9" stroke="#b51f1c" strokeWidth="1.800" />
    </svg>
    <div className="w-[13px]" />
    <Box w="w-[34px]" />
    <Box w="w-[34px]" />
    <Box w="w-[26px]" />
    <Box w="w-[26px]" />
  </div>
);

const Taskbar = () => (
  <div className="flex h-7 shrink-0 items-center bg-linear-to-b from-[#2c6ee4] via-[#1b55d2] via-20% to-[#1a4fc8] text-white">
    <div className="flex h-full w-[90px] shrink-0 items-center rounded-r-[9px] bg-linear-to-b from-[#5aa856] via-[#368b38] to-[#2c7d31]">
      <svg width="18" height="18" viewBox="0 0 18 18" className="ml-[9px]">
        <path d="M3 3c2-1.500 4-1 6 0l-1 5.500c-2-1-4-1-6 0z" fill="#e8582d" />
        <path d="M10 3.500c2 1 4 1 6 0L15 9c-2 1-4 1-6 0z" fill="#85c440" />
        <path d="M2 9.500c2-1 4-1 6 0L7 15c-2-1-4-1-6 0z" fill="#5289e6" />
        <path d="M9 10c2 1 4 1 6 0l-1 5.500c-2 1-4 1-6 0z" fill="#f6c62c" />
      </svg>
      <span className="pl-[5px] font-['Open_Sans'] text-[15px] leading-none font-bold tracking-[-0.5px] italic [font-stretch:normal]">start</span>
    </div>
    <div className="ml-[10px] flex h-[23px] w-[148px] shrink-0 items-center rounded-[2px] bg-[#1343a5] pl-[10px]">
      <svg width="14" height="14" viewBox="0 0 16 16">
        <path d="M4.500 1.500h10v12h-10z" fill="#e7edf8" stroke="#5a78b8" />
        <path d="M.5 1.500h10v10H.500z" fill="#f3f6fb" stroke="#486cb8" />
        <path d="M2.500 4l1.500 5L5.500 5 7 9l1.500-5" fill="none" stroke="#29549c" strokeWidth="1.400" />
      </svg>
      <span className="pt-[2px] pl-[3px] tracking-[0.1px] whitespace-nowrap">Document1 - Microsof...</span>
    </div>
    <div className="ml-[2px] flex h-[23px] w-[148px] shrink-0 items-center rounded-[2px] bg-[#3478e8] pl-[9px]">
      <svg width="14" height="11" viewBox="0 0 14 11"><path d="M0 0h14v11H0z" fill="#f2f4fb" /><path d="M0 2h5.500v4H0zM8 2h6v4H8z" fill="#1b1aa5" /></svg>
      <span className="pt-px pl-[3px] tracking-[0.1px]">Recording</span>
    </div>
    <div className="grow" />
    <svg width="17" height="16" viewBox="0 0 17 16" className="mr-[7px]">
      <path d="M2 5l4-4 4 4z" fill="#e5e7e8" stroke="#222" strokeWidth=".8" />
      <circle cx="6" cy="11" r="3.300" fill="#f4f5f8" stroke="#333" />
      <path d="M1 6h9M9 14l6-11" stroke="#171a20" strokeWidth="2" />
    </svg>
    <div className="flex h-full w-[155px] shrink-0 items-center border-l border-[#0c4aa5] bg-linear-to-b from-[#30a2ee] via-[#1290e6] via-20% to-[#118bdd]">
      <svg width="16" height="16" viewBox="0 0 16 16" className="-ml-2 shrink-0"><circle cx="8" cy="8" r="7.300" fill="#3296ea" stroke="#88c6f6" /><path d="M9.500 4.500L6 8l3.500 3.500" fill="none" stroke="#fff" strokeWidth="2" /></svg>
      <svg width="14" height="11" viewBox="0 0 14 11" className="ml-[2px]"><path d="M0 0h14v11H0z" fill="#f2f4fb" /><path d="M0 3h6v4H0zM8 3h6v4H8z" fill="#1b1aa5" /></svg>
      <svg width="14" height="14" viewBox="0 0 14 14" className="ml-[2px]"><path d="M0 0h12v12H0z" fill="#f5f1f1" /><path d="M3 1v11M10 1L4 6l7 6" fill="none" stroke="#d31e1c" strokeWidth="2.600" /><path d="M8 8h6v6H8z" fill="#191919" /></svg>
      <svg width="15" height="13" viewBox="0 0 15 13" className="ml-[3px]"><path d="M1 4l7-3 6 5-6 5-7-4z" fill="#d5dee3" stroke="#74899a" /><path d="M4 5l6 4" stroke="#8ba0ac" /></svg>
      <svg width="15" height="15" viewBox="0 0 15 15" className="ml-[2px]"><path d="M4 1h9v7H4z" fill="#263f85" stroke="#8ea3c2" /><path d="M1 5h7v6H1z" fill="#31508f" stroke="#9caec8" /><path d="M7 7l6 6M13 7l-6 6" stroke="#e43028" strokeWidth="2.200" /></svg>
      <svg width="13" height="15" viewBox="0 0 13 15" className="ml-[3px]"><path d="M6.500 1l5.500 2c0 5-1 9-5.500 11C2 12 1 8 1 3z" fill="#d62b2a" stroke="#e2a1a3" /><path d="M4 5l5 5M9 5l-5 5" stroke="#fff" strokeWidth="1.600" /></svg>
      <span className="pl-[10px] text-[10px] whitespace-nowrap">9:20 AM</span>
    </div>
  </div>
);

export default function App() {
  return (
    <div className="flex h-[720px] w-[960px] flex-col overflow-hidden bg-[#bcd6f1] font-['DejaVu_Sans_Condensed','DejaVu_Sans',sans-serif] text-[10px] leading-none text-[#111] [font-stretch:condensed]">
      <TitleBar />
      <div className="flex h-[97px] shrink-0 flex-col gap-px bg-linear-to-r from-[#9dbcee] to-[#bdd7f2] to-70%">
        <MenuBar />
        <StandardBar />
        <FormatBar />
        <DictBar />
      </div>
      <div className="flex h-[526px] shrink-0">
        <Editor />
        <TaskPane />
      </div>
      <DrawBar />
      <StatusBar />
      <Taskbar />
    </div>
  );
}
